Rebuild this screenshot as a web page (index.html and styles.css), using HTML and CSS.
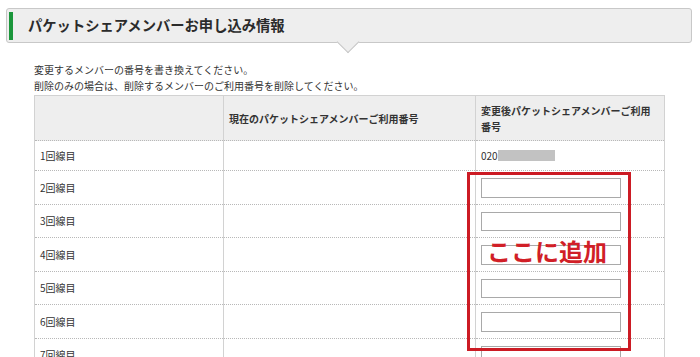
FILE: index.html
```html
<!DOCTYPE html>
<html lang="ja">
<head>
<meta charset="utf-8">
<link rel="stylesheet" href="styles.css">
</head>
<body>
<div class="page">
  <div class="heading">
    <span class="heading-bar"></span>
    <h2 class="heading-title">パケットシェアメンバーお申し込み情報</h2>
  </div>
  <p class="intro">変更するメンバーの番号を書き換えてください。<br>削除のみの場合は、削除するメンバーのご利用番号を削除してください。</p>
  <table class="members">
    <colgroup><col class="c1"><col class="c2"><col class="c3"></colgroup>
    <thead>
      <tr><th></th><th>現在のパケットシェアメンバーご利用番号</th><th>変更後パケットシェアメンバーご利用番号</th></tr>
    </thead>
    <tbody>
      <tr><td>1回線目</td><td></td><td>020<span class="redact"></span></td></tr>
      <tr><td>2回線目</td><td></td><td><input class="num" type="text"></td></tr>
      <tr><td>3回線目</td><td></td><td><input class="num" type="text"></td></tr>
      <tr><td>4回線目</td><td></td><td><input class="num" type="text"></td></tr>
      <tr><td>5回線目</td><td></td><td><input class="num" type="text"></td></tr>
      <tr><td>6回線目</td><td></td><td><input class="num" type="text"></td></tr>
      <tr><td>7回線目</td><td></td><td><input class="num" type="text"></td></tr>
    </tbody>
  </table>
  <div class="callout"><span class="callout-text">ここに追加</span></div>
</div>
</body>
</html>
```
FILE: styles.css
```css
html, body {
  margin: 0;
  padding: 0;
  background: #fff;
}
body {
  font-family: "Noto Sans CJK JP", "Liberation Sans", sans-serif;
  color: #333;
  width: 700px;
  height: 357px;
  overflow: hidden;
}
.page {
  position: relative;
  padding-top: 8px;
}
.heading {
  position: relative;
  margin-left: 6px;
  width: 686px;
  height: 35px;
  box-sizing: border-box;
  border: 1px solid #c8c8c8;
  border-radius: 3px;
  background: #eeeeee;
  display: flex;
  align-items: center;
}
.heading::after {
  content: "";
  position: absolute;
  left: 333px;
  top: 25px;
  width: 15px;
  height: 15px;
  background: #eeeeee;
  border-right: 1px solid #c8c8c8;
  border-bottom: 1px solid #c8c8c8;
  transform: rotate(45deg);
}
.heading-bar {
  width: 4px;
  height: 28px;
  margin-left: 2px;
  background: #1b963b;
}
.heading-title {
  margin: -2px 0 0 15px;
  font-size: 14.3px;
  font-weight: bold;
  line-height: 20px;
  color: #2b2b2b;
}
.intro {
  margin: 19px 0 0 34px;
  font-size: 10px;
  line-height: 16px;
}
.members {
  margin: 1px 0 0 34px;
  width: 630px;
  table-layout: fixed;
  border-collapse: collapse;
  font-size: 10px;
  line-height: 16px;
}
.c1 { width: 189px; }
.c2 { width: 252px; }
.c3 { width: 189px; }
.members th,
.members td {
  padding: 7px 5px 6px;
  text-align: left;
  vertical-align: middle;
  border-left: 1px solid #d2d2d2;
  border-right: 1px solid #d2d2d2;
  border-bottom: 1px dotted #b8b8b8;
}
.members th {
  padding-bottom: 5px;
  background: #eeeeee;
  font-weight: bold;
  border-top: 1px solid #d2d2d2;
}
.num {
  display: block;
  width: 140px;
  height: 19.5px;
  box-sizing: border-box;
  margin: 0;
  border: 1px solid #a9a9a9;
  background: #fff;
}
.redact {
  display: inline-block;
  width: 57px;
  height: 11px;
  background: #c2c2c2;
  vertical-align: -1px;
}
.callout {
  position: absolute;
  left: 467px;
  top: 172px;
  width: 164px;
  height: 179px;
  box-sizing: border-box;
  border: 3px solid #cc1b24;
}
.callout-text {
  position: absolute;
  left: 17px;
  top: 63px;
  font-size: 24px;
  font-weight: bold;
  line-height: 26px;
  color: #d11f27;
  white-space: nowrap;
}
```
